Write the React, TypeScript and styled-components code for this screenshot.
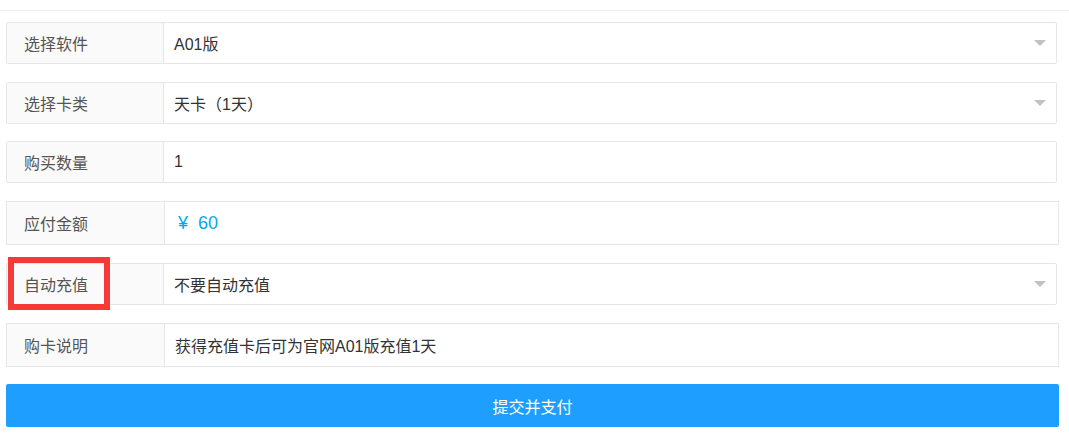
import React from "react";
import styled, { createGlobalStyle } from "styled-components";

const GlobalStyle = createGlobalStyle`
    body {
        margin: 0;
        background: #fff;
        font-family: "Liberation Sans", "Noto Sans CJK SC", sans-serif;
    }
`;

const TopBar = styled.div`
    height: 10px;
    border-bottom: 1px solid #f0f0f0;
`;

const Form = styled.div`
    display: flex;
    flex-direction: column;
    gap: 18px;
    padding: 11px 10px 0 6px;
`;

const Row = styled.div<{ $tall?: boolean; $pull?: boolean }>`
    position: relative;
    display: flex;
    height: ${(p) => (p.$tall ? 44 : 42)}px;
    box-sizing: border-box;
    border: 1px solid #e6e6e6;
    border-radius: ${(p) => (p.$tall ? 0 : 2)}px;
    margin-right: ${(p) => (p.$tall ? 0 : 2)}px;
    margin-top: ${(p) => (p.$pull ? -1 : 0)}px;
`;

const Label = styled.div<{ $wide?: boolean }>`
    width: ${(p) => (p.$wide ? 158 : 157)}px;
    flex-shrink: 0;
    box-sizing: border-box;
    display: flex;
    align-items: center;
    padding-left: 17px;
    background: #fafafa;
    border-right: 1px solid #e6e6e6;
    font-size: 16px;
    color: #555;
`;

const Field = styled.div`
    flex: 1;
    display: flex;
    align-items: center;
    justify-content: space-between;
    padding: 0 10px 0 10px;
    font-size: 16px;
    color: #333;
`;

const Price = styled.span`
    padding-left: 3px;
    font-size: 18px;
    color: #01aaed;
`;

const Currency = styled.span`
    margin-right: 10px;
`;

const Arrow = styled.span`
    width: 0;
    height: 0;
    border-left: 6px solid transparent;
    border-right: 6px solid transparent;
    border-top: 6px solid #c2c2c2;
`;

const Highlight = styled.div`
    position: absolute;
    left: 1px;
    top: -7px;
    width: 102px;
    height: 53px;
    box-sizing: border-box;
    border: 6px solid #f53838;
    pointer-events: none;
`;

const Submit = styled.button`
    height: 43px;
    margin-top: -1px;
    border: none;
    border-radius: 2px;
    background: #1e9fff;
    color: #fff;
    font-family: inherit;
    font-size: 16px;
    cursor: pointer;
`;

export default function App() {
    return (
        <>
            <GlobalStyle />
            <TopBar />
            <Form>
                <Row>
                    <Label>选择软件</Label>
                    <Field>
                        A01版
                        <Arrow />
                    </Field>
                </Row>
                <Row>
                    <Label>选择卡类</Label>
                    <Field>
                        天卡（1天）
                        <Arrow />
                    </Field>
                </Row>
                <Row $pull>
                    <Label>购买数量</Label>
                    <Field>1</Field>
                </Row>
                <Row $tall>
                    <Label $wide>应付金额</Label>
                    <Field>
                        <Price>
                            <Currency>¥</Currency>60
                        </Price>
                    </Field>
                </Row>
                <Row>
                    <Highlight />
                    <Label>自动充值</Label>
                    <Field>
                        不要自动充值
                        <Arrow />
                    </Field>
                </Row>
                <Row $tall>
                    <Label $wide>购卡说明</Label>
                    <Field>获得充值卡后可为官网A01版充值1天</Field>
                </Row>
                <Submit>提交并支付</Submit>
            </Form>
        </>
    );
}
